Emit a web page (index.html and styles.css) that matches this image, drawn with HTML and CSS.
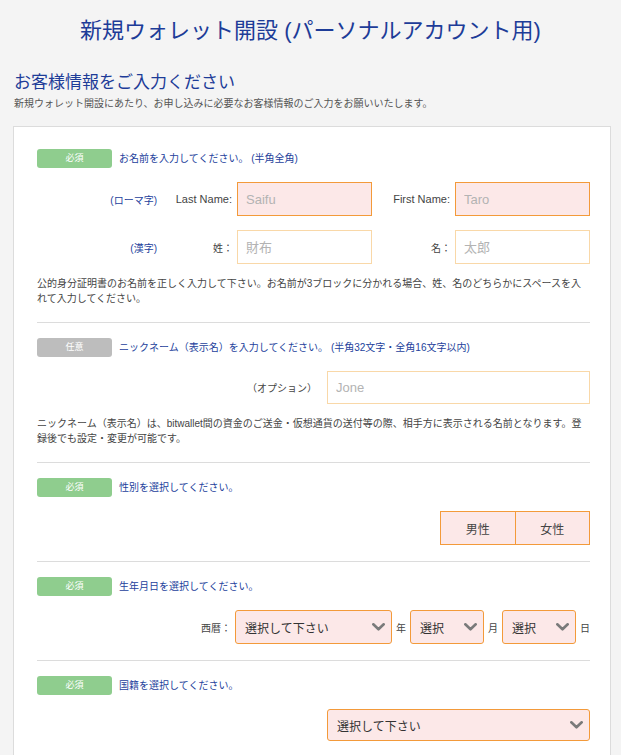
FILE: index.html
```html
<!DOCTYPE html>
<html lang="ja">
<head>
<meta charset="utf-8">
<title>新規ウォレット開設 (パーソナルアカウント用)</title>
<link rel="stylesheet" href="styles.css">
</head>
<body>
  <h1 class="page-title">新規ウォレット開設 (パーソナルアカウント用)</h1>

  <main class="wrap">
    <h2 class="lead-title">お客様情報をご入力ください</h2>
    <p class="lead-text">新規ウォレット開設にあたり、お申し込みに必要なお客様情報のご入力をお願いいたします。</p>

    <form class="card">
      <!-- 氏名 -->
      <section class="field first">
        <div class="field-head">
          <span class="badge req">必須</span>
          <span class="field-label">お名前を入力してください。 (半角全角)</span>
        </div>
        <div class="name-grid">
          <span class="sub-label">(ローマ字)</span>
          <label class="inline-label" for="last-en">Last Name:</label>
          <input class="text-input hl" id="last-en" placeholder="Saifu">
          <label class="inline-label" for="first-en">First Name:</label>
          <input class="text-input hl" id="first-en" placeholder="Taro">

          <span class="sub-label">(漢字)</span>
          <label class="inline-label cjk" for="last-jp">姓：</label>
          <input class="text-input" id="last-jp" placeholder="財布">
          <label class="inline-label cjk" for="first-jp">名：</label>
          <input class="text-input" id="first-jp" placeholder="太郎">
        </div>
        <p class="note">公的身分証明書のお名前を正しく入力して下さい。お名前が3ブロックに分かれる場合、姓、名のどちらかにスペースを入れて入力してください。</p>
      </section>

      <!-- ニックネーム -->
      <section class="field">
        <div class="field-head">
          <span class="badge opt">任意</span>
          <span class="field-label">ニックネーム（表示名）を入力してください。 (半角32文字・全角16文字以内)</span>
        </div>
        <div class="row-end">
          <label class="inline-label cjk" for="nick">（オプション）</label>
          <input class="text-input nick" id="nick" placeholder="Jone">
        </div>
        <p class="note">ニックネーム（表示名）は、bitwallet間の資金のご送金・仮想通貨の送付等の際、相手方に表示される名前となります。登録後でも設定・変更が可能です。</p>
      </section>

      <!-- 性別 -->
      <section class="field">
        <div class="field-head">
          <span class="badge req">必須</span>
          <span class="field-label">性別を選択してください。</span>
        </div>
        <div class="row-end">
          <div class="toggle">
            <button type="button" class="toggle-btn">男性</button>
            <button type="button" class="toggle-btn">女性</button>
          </div>
        </div>
      </section>

      <!-- 生年月日 -->
      <section class="field">
        <div class="field-head">
          <span class="badge req">必須</span>
          <span class="field-label">生年月日を選択してください。</span>
        </div>
        <div class="row-end date-row">
          <span class="unit">西暦：</span>
          <div class="select-box year">
            <select><option>選択して下さい</option></select>
            <svg class="chev" viewBox="0 0 13 8" width="13" height="8"><polyline points="1.3,1.3 6.5,6.3 11.7,1.3"/></svg>
          </div>
          <span class="unit">年</span>
          <div class="select-box small">
            <select><option>選択</option></select>
            <svg class="chev" viewBox="0 0 13 8" width="13" height="8"><polyline points="1.3,1.3 6.5,6.3 11.7,1.3"/></svg>
          </div>
          <span class="unit">月</span>
          <div class="select-box small">
            <select><option>選択</option></select>
            <svg class="chev" viewBox="0 0 13 8" width="13" height="8"><polyline points="1.3,1.3 6.5,6.3 11.7,1.3"/></svg>
          </div>
          <span class="unit">日</span>
        </div>
      </section>

      <!-- 国籍 -->
      <section class="field">
        <div class="field-head">
          <span class="badge req">必須</span>
          <span class="field-label">国籍を選択してください。</span>
        </div>
        <div class="row-end">
          <div class="select-box wide">
            <select><option>選択して下さい</option></select>
            <svg class="chev" viewBox="0 0 13 8" width="13" height="8"><polyline points="1.3,1.3 6.5,6.3 11.7,1.3"/></svg>
          </div>
        </div>
      </section>
    </form>
  </main>
</body>
</html>
```

FILE: styles.css
```css
* {
  box-sizing: border-box;
}

body {
  margin: 0;
  background: #f4f4f4;
  font-family: "Liberation Sans", "Noto Sans CJK JP", sans-serif;
  color: #444;
}

.page-title {
  margin: 0;
  padding-top: 16px;
  font-size: 22px;
  line-height: 30px;
  font-weight: 400;
  color: #1d3c98;
  text-align: center;
}

.wrap {
  margin-left: 13px;
  width: 598px;
}

.lead-title {
  margin: 25px 0 0 1px;
  font-size: 17px;
  line-height: 24px;
  font-weight: 400;
  color: #1d3c98;
}

.lead-text {
  margin: 2px 0 0 1px;
  font-size: 10px;
  line-height: 14px;
  color: #555;
}

.card {
  margin-top: 15px;
  background: #fff;
  border: 1px solid #dcdcdc;
  padding: 0 20px 0 23px;
}

.field {
  padding: 15px 0 16px;
  border-bottom: 1px solid #dcdcdc;
}

.field.first {
  padding-top: 22px;
}

.field-head {
  display: flex;
  align-items: center;
  gap: 7px;
  margin-bottom: 14px;
}

.badge {
  width: 75px;
  height: 19px;
  border-radius: 3px;
  color: #fff;
  font-size: 9px;
  line-height: 19px;
  text-align: center;
}

.badge.req {
  background: #8fcd8e;
}

.badge.opt {
  background: #bdbdbd;
}

.field-label {
  font-size: 10px;
  line-height: 14px;
  color: #243f9c;
}

.name-grid {
  display: grid;
  grid-template-columns: 120px 80px 135px 83px 135px;
  row-gap: 14px;
  align-items: center;
}

.sub-label {
  text-align: right;
  font-size: 10px;
  color: #243f9c;
}

.inline-label {
  text-align: right;
  font-size: 11px;
  color: #444;
  padding-right: 5px;
}

.inline-label.cjk {
  font-size: 10px;
  padding-right: 4px;
}

.text-input {
  display: block;
  width: 135px;
  height: 34px;
  margin: 0;
  padding: 0 8px;
  border: 1px solid #f9d8a8;
  border-radius: 0;
  background: #fff;
  font-family: inherit;
  font-size: 13px;
  color: #333;
  outline: none;
}

.text-input.hl {
  border-color: #f39a3a;
  background: #fce8e8;
}

.text-input::placeholder {
  color: #b3b3b3;
}

.text-input.nick {
  width: 263px;
  height: 33px;
}

.row-end {
  display: flex;
  justify-content: flex-end;
  align-items: center;
}

.row-end .inline-label {
  padding-right: 10px;
}

.note {
  margin: 12px 0 0;
  font-size: 10px;
  line-height: 15px;
  color: #444;
}

.toggle {
  display: flex;
  width: 150px;
  height: 34px;
  border: 1px solid #f39a3a;
  background: #fce8e8;
}

.toggle-btn {
  flex: 1;
  margin: 0;
  padding: 0;
  border: 0;
  background: transparent;
  font-family: inherit;
  font-size: 12px;
  color: #444;
}

.toggle-btn + .toggle-btn {
  border-left: 1px solid #f39a3a;
}

.date-row {
  gap: 4px;
}

.unit {
  font-size: 10px;
  color: #444;
}

.select-box {
  position: relative;
  height: 34px;
}

.select-box select {
  display: block;
  width: 100%;
  height: 100%;
  margin: 0;
  padding: 0 24px 0 9px;
  appearance: none;
  -webkit-appearance: none;
  border: 1px solid #f39a3a;
  border-radius: 3px;
  background: #fce8e8;
  font-family: "Noto Sans CJK JP", sans-serif;
  font-size: 12px;
  color: #333;
  outline: none;
}

.select-box.year {
  width: 157px;
}

.select-box.small {
  width: 74px;
}

.select-box.wide {
  width: 263px;
  height: 32px;
}

.chev {
  position: absolute;
  right: 7px;
  top: 50%;
  margin-top: -4px;
  pointer-events: none;
}

.chev polyline {
  fill: none;
  stroke: #7a7a7a;
  stroke-width: 2.6;
  stroke-linecap: round;
  stroke-linejoin: round;
}
```
